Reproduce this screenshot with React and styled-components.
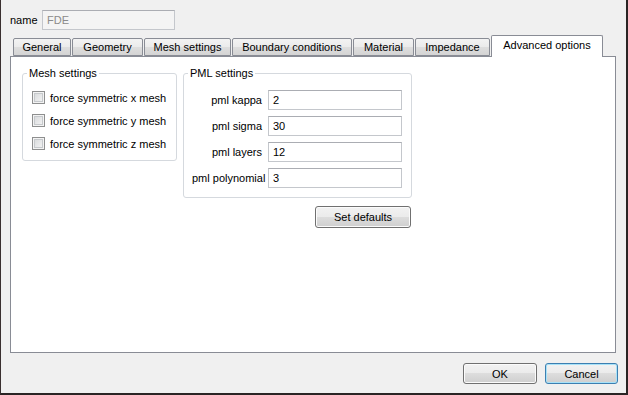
import styled, { createGlobalStyle } from 'styled-components';

const Global = createGlobalStyle`
    body {
        margin: 0;
        font-family: "Liberation Sans", Arial, sans-serif;
        font-size: 11px;
        color: #000;
    }
`

const Window = styled.div`
    width: 628px;
    height: 395px;
    box-sizing: border-box;
    background: #f0f0f0;
    border-left: 1px solid #3a3030;
    border-right: 2px solid #2a2424;
    border-bottom: 2px solid #2a2424;
    display: flex;
    flex-direction: column;
    padding: 10px 10px 9px 9px;
`

const NameRow = styled.div`
    display: flex;
    align-items: center;
    height: 20px;
    gap: 8px;
    label {
        width: 24px;
    }
`

const TextBox = styled.div`
    box-sizing: border-box;
    width: ${p => p.$width}px;
    height: 20px;
    border: 1px solid #c4c7cc;
    border-top-color: #abadb3;
    background: ${p => p.$disabled ? '#f4f4f4' : '#fff'};
    color: ${p => p.$disabled ? '#8a8a8a' : '#000'};
    padding-left: 4px;
    display: flex;
    align-items: center;
`

const TabBar = styled.div`
    display: flex;
    align-items: flex-end;
    gap: 1px;
    margin-top: 5px;
    padding-left: 3px;
    height: 22px;
    margin-bottom: -1px;
    position: relative;
    z-index: 1;
`

const Tab = styled.div`
    box-sizing: border-box;
    width: ${p => p.$width}px;
    height: ${p => p.$active ? 22 : 18}px;
    margin-bottom: ${p => p.$active ? 0 : 1}px;
    border: 1px solid #898c95;
    border-bottom: ${p => p.$active ? 'none' : '1px solid #898c95'};
    border-radius: 2px 2px 0 0;
    background: ${p => p.$active ? '#fff' : 'linear-gradient(#f3f3f3, #ebebeb 50%, #dedede 50%, #d4d4d4)'};
    display: flex;
    align-items: center;
    justify-content: center;
    padding-bottom: ${p => p.$active ? 3 : 0}px;
    white-space: nowrap;
`

const Pane = styled.div`
    flex: 1;
    background: #fff;
    border: 1px solid #898c95;
    padding: 10px 11px;
    display: flex;
    align-items: flex-start;
    gap: 6px;
`

const Group = styled.fieldset`
    margin: 0;
    box-sizing: border-box;
    width: ${p => p.$width}px;
    height: ${p => p.$height}px;
    border: 1px solid #d5d9de;
    border-radius: 3px;
    padding: 0 9px;
    legend {
        padding: 0 2px;
        margin-left: -5px;
        line-height: 13px;
    }
`

const CheckRow = styled.div`
    display: flex;
    align-items: center;
    gap: 5px;
    height: 13px;
    margin-top: ${p => p.$first ? 11 : 10}px;
`

const Check = styled.span`
    box-sizing: border-box;
    width: 13px;
    height: 13px;
    border: 1px solid #8e8f8f;
    background: linear-gradient(135deg, #d4d6d8, #f7f7f7);
    box-shadow: inset 0 0 0 1px #f3f3f3, inset 0 0 0 2px #c6c9cc;
`

const Column = styled.div`
    display: flex;
    flex-direction: column;
    align-items: flex-end;
`

const FormGrid = styled.div`
    display: grid;
    grid-template-columns: 70px 134px;
    column-gap: 6px;
    row-gap: 6px;
    margin-top: 10px;
    margin-left: -1px;
    align-items: center;
    label {
        text-align: right;
        white-space: nowrap;
    }
`

const Button = styled.div`
    box-sizing: border-box;
    width: ${p => p.$width}px;
    height: ${p => p.$height || 21}px;
    border: 1px solid ${p => p.$focused ? '#3c7fb1' : '#707070'};
    border-radius: 3px;
    background: linear-gradient(#f2f2f2, #ebebeb 50%, #dddddd 50%, #cfcfcf);
    box-shadow: inset 0 0 0 1px ${p => p.$focused ? '#a8e2f8' : '#fbfbfb'};
    display: flex;
    align-items: center;
    justify-content: center;
`

const DefaultsButton = styled(Button)`
    margin-top: 8px;
    margin-right: 1px;
`

const ButtonRow = styled.div`
    display: flex;
    justify-content: flex-end;
    gap: 8px;
    margin-top: 10px;
    margin-right: -2px;
`

const tabs = [
    ['General', 58], ['Geometry', 71], ['Mesh settings', 87], ['Boundary conditions', 120],
    ['Material', 61], ['Impedance', 75], ['Advanced options', 112],
]

const pml = [['pml kappa', '2'], ['pml sigma', '30'], ['pml layers', '12'], ['pml polynomial', '3']]

const App = () => {
    return (
        <Window>
            <Global />
            <NameRow>
                <label>name</label>
                <TextBox $width={133} $disabled>FDE</TextBox>
            </NameRow>
            <TabBar>
                {tabs.map(([t, w], i) => (
                    <Tab key={t} $width={w} $active={i === tabs.length - 1}>{t}</Tab>
                ))}
            </TabBar>
            <Pane>
                <Group $width={155} $height={94}>
                    <legend>Mesh settings</legend>
                    {['x', 'y', 'z'].map((a, i) => (
                        <CheckRow key={a} $first={i === 0}>
                            <Check />
                            <span>force symmetric {a} mesh</span>
                        </CheckRow>
                    ))}
                </Group>
                <Column>
                    <Group $width={228} $height={131}>
                        <legend>PML settings</legend>
                        <FormGrid>
                            {pml.flatMap(([l, v]) => [
                                <label key={l}>{l}</label>,
                                <TextBox key={l + 'v'} $width={134}>{v}</TextBox>,
                            ])}
                        </FormGrid>
                    </Group>
                    <DefaultsButton $width={96} $height={22}>Set defaults</DefaultsButton>
                </Column>
            </Pane>
            <ButtonRow>
                <Button $width={74}>OK</Button>
                <Button $width={73} $focused>Cancel</Button>
            </ButtonRow>
        </Window>
    );
};

export default App;
